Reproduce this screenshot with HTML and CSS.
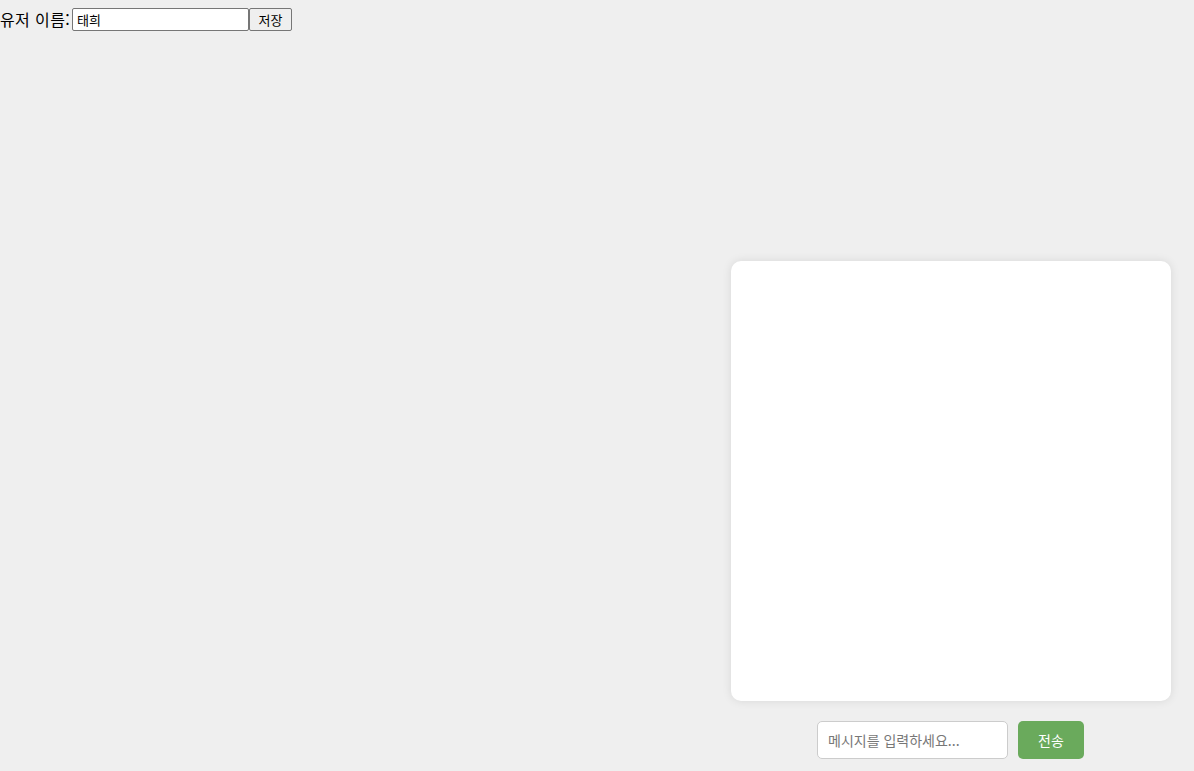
FILE: index.html
```html
<!DOCTYPE html>
<html lang="ko">
<head>
  <meta charset="UTF-8" />
  <title>채팅</title>
  <link rel="stylesheet" href="styles.css">
</head>
<body>
  <div class="page">
    <!-- 유저 이름 설정 -->
    <div class="user-bar">
      <label for="username">유저 이름:</label><input type="text" id="username" value="태희"><button class="save-btn">저장</button>
    </div>

    <!-- 채팅 영역 -->
    <div class="chat-wrap">
      <div class="chat-box" id="chatBox"></div>
      <div class="chat-form">
        <input type="text" id="message" placeholder="메시지를 입력하세요...">
        <button class="send-btn">전송</button>
      </div>
    </div>
  </div>
</body>
</html>
```

FILE: styles.css
```css
body {
  margin: 0;
  background: #efefef;
  font-family: "Noto Sans CJK KR", "Noto Sans", sans-serif;
  color: #000;
}

.page {
  display: flex;
  flex-direction: column;
  min-height: 100vh;
}

.user-bar {
  display: flex;
  align-items: center;
  padding-top: 8px;
  font-size: 16px;
  line-height: 23px;
  height: 23px;
}

.user-bar label {
  width: 72px;
  letter-spacing: 0.4px;
  line-height: 23px;
}

#username {
  box-sizing: border-box;
  width: 177px;
  height: 23px;
  margin: 0;
  padding: 1px 4px;
  border: 1px solid #767676;
  border-radius: 2px;
  background: #fff;
  font-family: "Noto Sans CJK KR", sans-serif;
  font-size: 13px;
}

.save-btn {
  box-sizing: border-box;
  width: 43px;
  height: 23px;
  margin: 0;
  padding: 0;
  border: 1px solid #767676;
  border-radius: 2px;
  background: #efefef;
  font-family: "Noto Sans CJK KR", sans-serif;
  font-size: 13px;
  line-height: 20px;
}

.chat-wrap {
  margin-top: auto;
  align-self: flex-end;
  width: 440px;
  margin-right: 23px;
  padding-bottom: 12px;
}

.chat-box {
  height: 440px;
  background: #fff;
  border-radius: 10px;
  box-shadow: 0 0 10px rgba(0, 0, 0, 0.1);
}

.chat-form {
  display: flex;
  justify-content: center;
  gap: 10px;
  margin-top: 20px;
  padding-right: 1px;
}

#message {
  box-sizing: border-box;
  width: 191px;
  height: 38px;
  margin: 0;
  padding: 0 10px;
  border: 1px solid #ccc;
  border-radius: 5px;
  background: #fff;
  font-family: "Noto Sans CJK KR", sans-serif;
  font-size: 14px;
}

#message::placeholder {
  color: #777;
}

.send-btn {
  box-sizing: border-box;
  width: 66px;
  height: 38px;
  margin: 0;
  border: none;
  border-radius: 5px;
  background: #6aaa5c;
  color: #fff;
  font-family: "Noto Sans CJK KR", sans-serif;
  font-size: 14px;
  cursor: pointer;
}
```
